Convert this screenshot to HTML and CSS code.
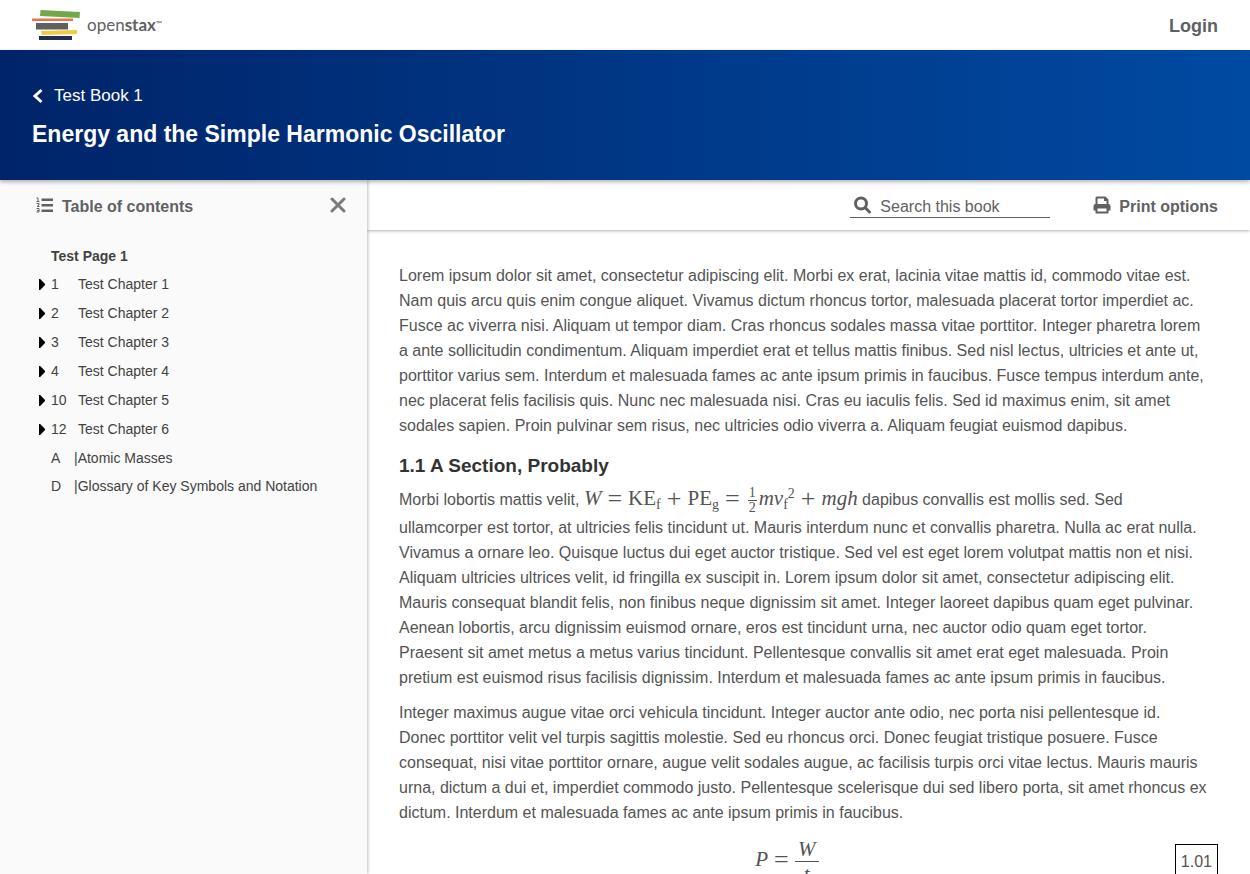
FILE: index.html
```
<!DOCTYPE html>
<html lang="en">
<head>
<meta charset="utf-8">
<title>Energy and the Simple Harmonic Oscillator</title>
<link rel="stylesheet" href="styles.css">
</head>
<body>
<nav class="topbar">
  <a class="logo" href="#" aria-label="openstax">
    <svg class="logo-books" viewBox="0 0 48 30" width="48" height="30" aria-hidden="true">
      <path fill="#72a84a" d="M8.500 0l39.500 2-.5 6-39.500-2z"/>
      <path fill="#e8754c" d="M0 8.500h41v2.500H0z"/>
      <path fill="#5f6062" d="M4 13h32v6.500H4z"/>
      <path fill="#f0cb40" d="M9 21l36-1v4l-35 1z"/>
      <path fill="#262c58" d="M7 26h33v4H7z"/>
    </svg>
    <span class="logo-text">open<b>stax</b><small>™</small></span>
  </a>
  <a class="login" href="#">Login</a>
</nav>
<header class="banner">
  <a class="book-link" href="#">
    <svg viewBox="0 0 12 16" width="12" height="16" aria-hidden="true"><path d="M9.500 2L3 8l6.500 6" fill="none" stroke="currentColor" stroke-width="3"/></svg>
    <span>Test Book 1</span>
  </a>
  <h1>Energy and the Simple Harmonic Oscillator</h1>
</header>
<div class="layout">
  <aside class="sidebar">
    <div class="toc-head">
      <svg viewBox="0 0 18 16" width="18" height="16" aria-hidden="true">
        <path fill="currentColor" d="M5.500 1.500H17v2.500H5.500zM5.500 7H17v2.500H5.500zM5.500 12.500H17V15H5.500z"/>
        <path fill="none" stroke="currentColor" d="M.5 1h1.500v3.500M.5 4.500h3M.5 6.500h2.500v1.500L1 9.500h2.500M.5 11.500h2.500v3.500H.5M1 13.500h2"/>
      </svg>
      <h2>Table of contents</h2>
      <button class="close" type="button" aria-label="Close table of contents">
        <svg viewBox="0 0 16 16" width="16" height="16" aria-hidden="true"><path d="M2 2l12 12M14 2L2 14" fill="none" stroke="currentColor" stroke-width="3" stroke-linecap="round"/></svg>
      </button>
    </div>
    <ul class="toc">
      <li class="page"><a class="current" href="#">Test Page 1</a></li>
      <li class="chapter"><button type="button"><i></i><span class="num">1</span><span>Test Chapter 1</span></button></li>
      <li class="chapter"><button type="button"><i></i><span class="num">2</span><span>Test Chapter 2</span></button></li>
      <li class="chapter"><button type="button"><i></i><span class="num">3</span><span>Test Chapter 3</span></button></li>
      <li class="chapter"><button type="button"><i></i><span class="num">4</span><span>Test Chapter 4</span></button></li>
      <li class="chapter"><button type="button"><i></i><span class="num">10</span><span>Test Chapter 5</span></button></li>
      <li class="chapter"><button type="button"><i></i><span class="num">12</span><span>Test Chapter 6</span></button></li>
      <li class="page"><a href="#"><span class="letter">A</span><span>|Atomic Masses</span></a></li>
      <li class="page"><a href="#"><span class="letter">D</span><span>|Glossary of Key Symbols and Notation</span></a></li>
    </ul>
  </aside>
  <div class="reader">
    <div class="toolbar">
      <label class="search">
        <svg viewBox="0 0 18 18" width="18" height="18" aria-hidden="true"><circle cx="7" cy="7.500" r="5.500" fill="none" stroke="currentColor" stroke-width="3"/><path d="M11.500 12l4 4" stroke="currentColor" stroke-width="3" stroke-linecap="round"/></svg>
        <input type="text" placeholder="Search this book" aria-label="Search this book">
      </label>
      <button class="print" type="button">
        <svg viewBox="0 0 18 18" width="18" height="18" aria-hidden="true"><path fill="currentColor" fill-rule="evenodd" d="M2.500 8V2Q2.500 .500 4 .500h8.500L15.500 3.500V8q2 0 2 2v4.500h-2V17q0 .5-.5.500H3q-.5 0-.5-.5v-2.500h-2V10Q.5 8 2.500 8zM4.500 2.500V8h9V5h-2.500V2.500zM4.500 12.500v3h9v-3z"/></svg>
        <span>Print options</span>
      </button>
    </div>
    <main class="content">
      <p>Lorem ipsum dolor sit amet, consectetur adipiscing elit. Morbi ex erat, lacinia vitae mattis id, commodo vitae est.<br>
      Nam quis arcu quis enim congue aliquet. Vivamus dictum rhoncus tortor, malesuada placerat tortor imperdiet ac.<br>
      Fusce ac viverra nisi. Aliquam ut tempor diam. Cras rhoncus sodales massa vitae porttitor. Integer pharetra lorem<br>
      a ante sollicitudin condimentum. Aliquam imperdiet erat et tellus mattis finibus. Sed nisl lectus, ultricies et ante ut,<br>
      porttitor varius sem. Interdum et malesuada fames ac ante ipsum primis in faucibus. Fusce tempus interdum ante,<br>
      nec placerat felis facilisis quis. Nunc nec malesuada nisi. Cras eu iaculis felis. Sed id maximus enim, sit amet<br>
      sodales sapien. Proin pulvinar sem risus, nec ultricies odio viverra a. Aliquam feugiat euismod dapibus.</p>
      <h2>1.1 A Section, Probably</h2>
      <p>Morbi lobortis mattis velit, <span class="math"><i>W</i><span class="op">=</span>KE<sub>f</sub><span class="op">+</span>PE<sub>g</sub><span class="op">=</span><span class="frac small"><span>1</span><span>2</span></span><i>mv</i><sub>f</sub><sup>2</sup><span class="op">+</span><i>mgh</i></span> dapibus convallis est mollis sed. Sed<br>
      ullamcorper est tortor, at ultricies felis tincidunt ut. Mauris interdum nunc et convallis pharetra. Nulla ac erat nulla.<br>
      Vivamus a ornare leo. Quisque luctus dui eget auctor tristique. Sed vel est eget lorem volutpat mattis non et nisi.<br>
      Aliquam ultricies ultrices velit, id fringilla ex suscipit in. Lorem ipsum dolor sit amet, consectetur adipiscing elit.<br>
      Mauris consequat blandit felis, non finibus neque dignissim sit amet. Integer laoreet dapibus quam eget pulvinar.<br>
      Aenean lobortis, arcu dignissim euismod ornare, eros est tincidunt urna, nec auctor odio quam eget tortor.<br>
      Praesent sit amet metus a metus varius tincidunt. Pellentesque convallis sit amet erat eget malesuada. Proin<br>
      pretium est euismod risus facilisis dignissim. Interdum et malesuada fames ac ante ipsum primis in faucibus.</p>
      <p>Integer maximus augue vitae orci vehicula tincidunt. Integer auctor ante odio, nec porta nisi pellentesque id.<br>
      Donec porttitor velit vel turpis sagittis molestie. Sed eu rhoncus orci. Donec feugiat tristique posuere. Fusce<br>
      consequat, nisi vitae porttitor ornare, augue velit sodales augue, ac facilisis turpis orci vitae lectus. Mauris mauris<br>
      urna, dictum a dui et, imperdiet commodo justo. Pellentesque scelerisque dui sed libero porta, sit amet rhoncus ex<br>
      dictum. Interdum et malesuada fames ac ante ipsum primis in faucibus.</p>
      <div class="equation">
        <span class="math"><i>P</i><span class="op">=</span><span class="frac"><i>W</i><i>t</i></span></span>
        <span class="eq-number">1.01</span>
      </div>
    </main>
  </div>
</div>
</body>
</html>
```
FILE: styles.css
```
* { box-sizing: border-box; }
html, body { height: 100%; }
body {
  margin: 0;
  display: flex;
  flex-direction: column;
  overflow: hidden;
  background: #fff;
  color: #545454;
  font: 16px/25px "Liberation Sans", Arial, sans-serif;
}
a { color: inherit; text-decoration: none; }
button { border: 0; padding: 0; background: none; color: inherit; font: inherit; cursor: pointer; }
svg { display: block; flex: none; }

.topbar {
  flex: none;
  height: 50px;
  padding: 0 32px;
  display: flex;
  align-items: center;
  justify-content: space-between;
}
.logo { display: flex; align-items: center; gap: 7px; }
.logo-text { font: 17px/24px Lato, sans-serif; color: #5f6062; }
.logo-text small { font-size: 8px; line-height: 8px; vertical-align: 4px; }
.login { padding-top: 2px; font-size: 18px; font-weight: bold; color: #606163; }

.banner {
  flex: none;
  height: 130px;
  padding: 32px 32px 0;
  color: #fff;
  background: linear-gradient(to right, #002469, #004aa2);
  box-shadow: 0 2px 4px rgba(0, 0, 0, 0.3);
  z-index: 2;
}
.book-link { display: flex; align-items: center; gap: 10px; font-size: 17px; line-height: 28px; }
.banner h1 { margin: 8px 0 0; font-size: 23px; line-height: 32px; }

.layout { flex: 1; min-height: 0; display: flex; }
.sidebar {
  flex: none;
  width: 367px;
  background: #fafafa;
  box-shadow: 1px 0 3px rgba(0, 0, 0, 0.25);
  z-index: 1;
}
.toc-head {
  height: 50px;
  padding: 0 21px 0 36px;
  display: flex;
  align-items: center;
  gap: 8px;
  color: #606163;
}
.toc-head h2 { flex: 1; margin: 4px 0 0; font-size: 16px; line-height: 24px; }
.close { color: #7a7a7a; }
.toc {
  list-style: none;
  margin: 0;
  padding: 12px 39px;
  color: #424242;
  font-size: 14px;
  line-height: 28px;
}
.toc a { display: flex; padding-left: 12px; }
.current { font-weight: bold; }
.letter { width: 23px; }
.toc button { display: flex; align-items: center; line-height: 29px; }
.toc i { width: 12px; }
.toc i::before {
  content: "";
  display: block;
  width: 6px;
  height: 11px;
  background: #000;
  clip-path: polygon(0 0, 20% 0, 100% 45%, 100% 55%, 20% 100%, 0 100%);
}
.num { width: 27px; text-align: left; }

.reader { flex: 1; min-width: 0; }
.toolbar {
  height: 50px;
  padding: 0 32px;
  display: flex;
  align-items: center;
  justify-content: flex-end;
  gap: 43px;
  color: #606163;
  box-shadow: 0 1px 3px rgba(0, 0, 0, 0.3);
}
.search {
  display: flex;
  align-items: center;
  gap: 8px;
  width: 200px;
  height: 25px;
  margin-top: 1px;
  padding-left: 4px;
  border-bottom: 1px solid #606163;
}
.search input {
  width: 100%;
  min-width: 0;
  border: 0;
  padding: 2px 0 0;
  outline: 0;
  background: none;
  color: inherit;
  font: inherit;
}
.search input::placeholder { color: inherit; opacity: 1; }
.print { display: flex; align-items: center; gap: 8px; font-weight: bold; }
.print span { margin-top: 2px; }

.content { padding: 33px 32px 0; }
.content p { margin: 0 0 10px; white-space: nowrap; }
.content h2 { margin: 0 0 6px; padding-top: 4px; font-size: 19px; line-height: 28px; color: #333; }

.math { font: 21px/20px "Liberation Serif", serif; color: #545454; }
.math sub, .math sup { font-size: 14px; line-height: 0; }
.math sub { vertical-align: -4px; }
.math sup { vertical-align: 7px; }
.op { margin: 0 6px; font-size: 26px; line-height: 0; vertical-align: -2px; }
.frac { display: inline-flex; flex-direction: column; vertical-align: middle; text-align: center; }
.frac > :first-child { border-bottom: 1px solid; }
.frac.small { margin: 0 2px; font-size: 14px; line-height: 14px; }
.frac.small span { padding: 0 1px; }
.equation {
  display: flex;
  align-items: center;
  padding-top: 2px;
}
.equation .math { flex: 1; text-align: center; }
.equation .frac { line-height: 24px; width: 24px; }
.eq-number {
  padding: 4px 5px;
  border: 1px solid #000;
}
```
